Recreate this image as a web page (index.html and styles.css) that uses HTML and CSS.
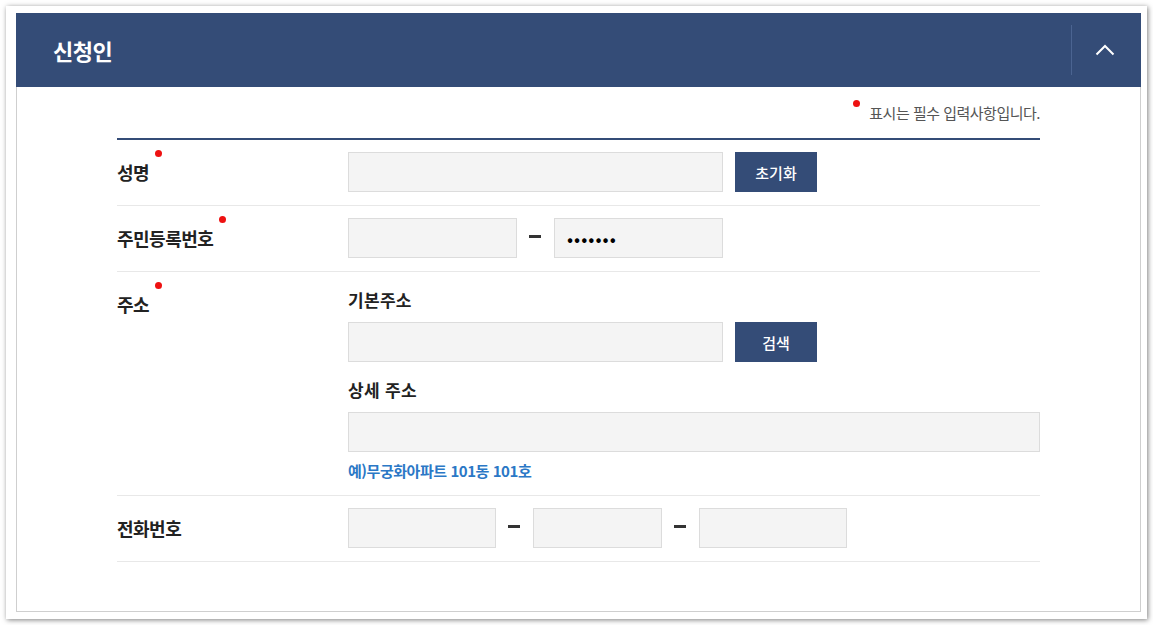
FILE: index.html
```html
<!DOCTYPE html>
<html lang="ko">
<head>
  <meta charset="UTF-8" />
  <meta name="viewport" content="width=device-width, initial-scale=1.0"/>
  <title>신청인</title>
  <link rel="stylesheet" href="styles.css">
</head>
<body>
  <div class="frame">
    <section class="panel">
      <header class="panel-head">
        <h2 class="panel-title">신청인</h2>
        <button class="fold-btn" type="button" aria-label="접기">
          <svg width="20" height="12" viewBox="0 0 20 12"><polyline points="1.5,10.5 10,2 18.5,10.5" fill="none" stroke="#fff" stroke-width="2"/></svg>
        </button>
      </header>

      <div class="panel-body">
        <p class="notice"><span class="req-dot"></span>표시는 필수 입력사항입니다.</p>

        <div class="form-table">
          <div class="form-row">
            <div class="row-label"><span class="req">성명</span></div>
            <div class="row-field">
              <div class="field-line">
                <input type="text" class="ipt w-mid" />
                <button type="button" class="btn">초기화</button>
              </div>
            </div>
          </div>

          <div class="form-row">
            <div class="row-label"><span class="req">주민등록번호</span></div>
            <div class="row-field">
              <div class="field-line">
                <input type="text" class="ipt w-jumin" />
                <span class="dash"></span>
                <input type="password" class="ipt ipt-pw w-jumin" value="1234567" />
              </div>
            </div>
          </div>

          <div class="form-row">
            <div class="row-label"><span class="req">주소</span></div>
            <div class="row-field">
              <div class="sub-label">기본주소</div>
              <div class="field-line">
                <input type="text" class="ipt w-mid" />
                <button type="button" class="btn">검색</button>
              </div>
              <div class="sub-label sub-gap">상세 주소</div>
              <input type="text" class="ipt w-full" />
              <p class="hint">예)무궁화아파트 101동 101호</p>
            </div>
          </div>

          <div class="form-row">
            <div class="row-label"><span>전화번호</span></div>
            <div class="row-field">
              <div class="field-line">
                <input type="text" class="ipt w-tel" />
                <span class="dash"></span>
                <input type="text" class="ipt w-tel-mid" />
                <span class="dash"></span>
                <input type="text" class="ipt w-tel" />
              </div>
            </div>
          </div>
        </div>
      </div>
    </section>
  </div>
</body>
</html>
```

FILE: styles.css
```css
* { box-sizing: border-box; }

body {
  margin: 0;
  background: #fff;
  font-family: 'Noto Sans CJK KR', 'Noto Sans', sans-serif;
  color: #222;
}

.frame {
  margin: 6px;
  height: 613px;
  padding: 7px 6px 7px 10px;
  background: #fff;
  box-shadow: 1px 1px 5px rgba(0, 0, 0, 0.5);
  display: flex;
}

.panel {
  flex: 1;
  display: flex;
  flex-direction: column;
}

.panel-head {
  height: 74px;
  background: #344c77;
  display: flex;
  align-items: center;
  padding-left: 37px;
}

.panel-title {
  flex: 1;
  margin: 0;
  color: #fff;
  font-size: 22px;
  font-weight: 700;
  letter-spacing: -0.5px;
}

.fold-btn {
  width: 66px;
  height: 50px;
  margin-right: 4px;
  padding: 0;
  border: none;
  border-left: 1px solid #4b6491;
  background: none;
  display: flex;
  align-items: center;
  justify-content: center;
  cursor: pointer;
}

.panel-body {
  flex: 1;
  border: 1px solid #cfcfcf;
  border-top: 0;
  padding: 0 100px;
}

.notice {
  margin: 0 0 15px;
  padding-top: 16px;
  line-height: 20px;
  text-align: right;
  font-size: 15px;
  color: #555;
  letter-spacing: -0.5px;
}

.req-dot {
  display: inline-block;
  width: 7px;
  height: 7px;
  border-radius: 50%;
  background: #ee1111;
  vertical-align: top;
  margin: -3px 9px 0 0;
}

.form-table {
  border-top: 2px solid #344c77;
}

.form-row {
  display: flex;
  align-items: flex-start;
  padding: 12px 0 13px;
  border-bottom: 1px solid #e8e8e8;
}

.row-label {
  width: 231px;
  flex-shrink: 0;
  line-height: 40px;
  font-size: 18px;
  font-weight: 700;
  letter-spacing: -0.5px;
  color: #222;
}

.row-label span { position: relative; }

.req::after {
  content: "";
  position: absolute;
  right: -13px;
  top: -9px;
  width: 7px;
  height: 7px;
  border-radius: 50%;
  background: #ee1111;
}

.row-field {
  flex: 1;
}

.field-line {
  display: flex;
  align-items: center;
}

.ipt {
  height: 40px;
  padding: 0 12px;
  border: 1px solid #dcdcdc;
  background: #f4f4f4;
  font-family: inherit;
  font-size: 14px;
  color: #111;
  outline: none;
}

.ipt-pw {
  font-size: 18px;
  letter-spacing: 1px;
  color: #000;
}

.w-mid { width: 375px; }
.w-jumin { width: 169px; }
.w-full { width: 100%; display: block; }
.w-tel { width: 148px; }
.w-tel-mid { width: 129px; }

.btn {
  width: 82px;
  height: 40px;
  margin-left: 12px;
  border: none;
  background: #344c77;
  color: #fff;
  font-family: inherit;
  font-size: 15px;
  font-weight: 500;
  cursor: pointer;
}

.dash {
  display: inline-block;
  width: 12px;
  height: 3px;
  margin: -3px 13px 0 12px;
  background: #333;
}

.sub-label {
  margin: 4px 0 10px;
  line-height: 24px;
  font-size: 17px;
  font-weight: 700;
  letter-spacing: 0.3px;
  color: #222;
}

.sub-gap { margin-top: 16px; }

.hint {
  margin: 7px 0 0;
  line-height: 23px;
  font-size: 15px;
  font-weight: 700;
  letter-spacing: -0.45px;
  color: #2b78c6;
}
```
